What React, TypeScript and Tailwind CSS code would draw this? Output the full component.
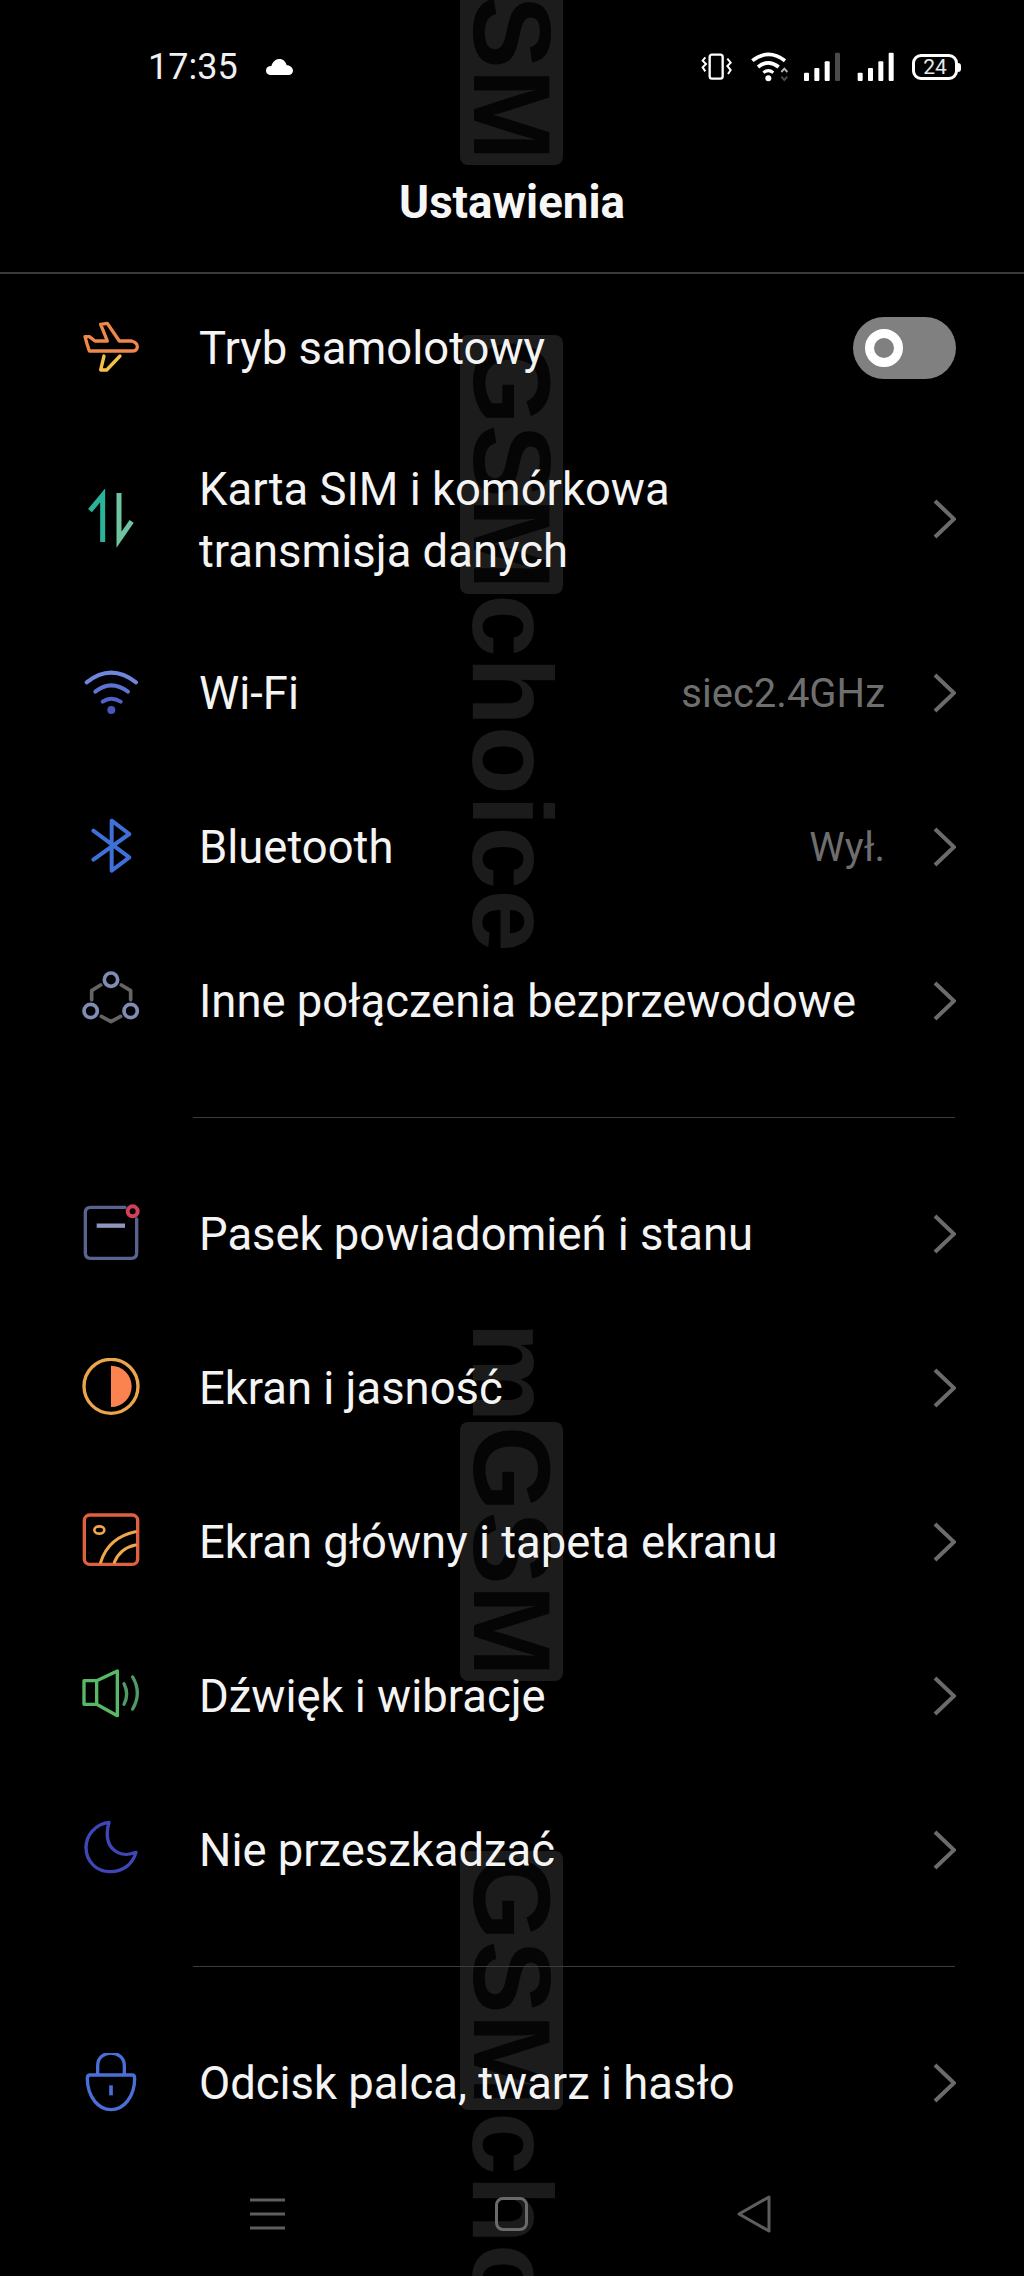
import React from "react";

const Chevron = () => (
  <svg width="24" height="40" viewBox="0 0 24 40" fill="none" className="shrink-0">
    <path d="M3 2 L22 20 L3 38" stroke="#6b6b6b" strokeWidth="4" />
  </svg>
);

const Icon = ({ vb, children }: { vb: string; children: React.ReactNode }) => (
  <svg
    width="60"
    height="60"
    viewBox={vb}
    fill="none"
    strokeLinecap="round"
    strokeLinejoin="round"
    className="shrink-0"
  >
    {children}
  </svg>
);

const PlaneIcon = () => (
  <Icon vb="63 84 180 180">
    <path
      d="M75 140 L88 140 L105 153 L142 153 L122 103 L142 100 L178 153 L215 153 Q232 158 232 170 Q232 183 215 183 L88 183 Q80 160 75 140 Z"
      stroke="#f0884a"
      strokeWidth="10"
    />
    <path d="M132 198 L122 240 L140 240 L180 198" stroke="#f5c04a" strokeWidth="10" />
  </Icon>
);

const SimIcon = () => (
  <Icon vb="63 603 180 180">
    <path d="M128 762 L128 622 L90 668" stroke="#2bb39a" strokeWidth="15" strokeLinecap="butt" strokeLinejoin="miter" />
    <path d="M177 615 L177 755 L215 700" stroke="#6fc3a0" strokeWidth="15" strokeLinecap="butt" strokeLinejoin="miter" />
  </Icon>
);

const WifiIcon = () => (
  <Icon vb="63 1122 180 180">
    <path d="M80 1180 Q153 1122 228 1180" stroke="#7085dc" strokeWidth="12" />
    <path d="M106 1208 Q153 1170 204 1208" stroke="#5f74d2" strokeWidth="12" />
    <path d="M128 1238 Q153 1220 182 1238" stroke="#5062c6" strokeWidth="12" />
    <circle cx="154" cy="1263" r="12" fill="#4656ba" />
  </Icon>
);

const BluetoothIcon = () => (
  <Icon vb="63 84 180 180">
    <path d="M100 125 L208 205 L155 245 L155 95 L208 135 L100 212" stroke="#3f6fd8" strokeWidth="12" />
  </Icon>
);

const WirelessIcon = () => (
  <Icon vb="63 66 180 180">
    <path d="M122 108 L95 125 L95 152 M184 108 L212 125 L212 152 M124 202 L153 218 L182 202" stroke="#646464" strokeWidth="11" />
    <circle cx="153" cy="92" r="20" stroke="#818cb4" strokeWidth="11" />
    <circle cx="92" cy="186" r="20" stroke="#818cb4" strokeWidth="11" />
    <circle cx="212" cy="186" r="20" stroke="#818cb4" strokeWidth="11" />
  </Icon>
);

const NotificationIcon = () => (
  <Icon vb="63 765 180 180">
    <path
      d="M195 775 L92 775 Q76 775 76 791 L76 912 Q76 928 92 928 L214 928 Q230 928 230 912 L230 810"
      stroke="#5a6390"
      strokeWidth="10"
    />
    <path d="M110 830 L195 830" stroke="#8f96bd" strokeWidth="13" strokeLinecap="butt" />
    <circle cx="218" cy="787" r="15" stroke="#d14058" strokeWidth="12" />
  </Icon>
);

const BrightnessIcon = () => (
  <Icon vb="63 1227 180 180">
    <circle cx="153" cy="1312" r="81" stroke="#eba64c" strokeWidth="10" />
    <path d="M153 1250 A62 62 0 0 1 153 1374 Z" fill="#fb8350" />
  </Icon>
);

const WallpaperIcon = () => (
  <Icon vb="63 249 180 180">
    <rect x="73" y="258" width="160" height="148" rx="16" stroke="#e0613f" strokeWidth="10" />
    <ellipse cx="118" cy="303" rx="15" ry="11" stroke="#f0a64d" strokeWidth="8" />
    <path d="M122 400 Q145 325 226 308 M163 400 Q180 358 226 348" stroke="#f0a64d" strokeWidth="9" />
  </Icon>
);

const SoundIcon = () => (
  <Icon vb="63 711 180 180">
    <path d="M72 755 L110 755 L172 726 L172 860 L110 826 L72 826 Z M110 755 L110 826" stroke="#58b868" strokeWidth="10" />
    <path d="M192 764 Q208 795 192 826" stroke="#4f9a65" strokeWidth="10" />
    <path d="M218 744 Q246 792 218 840" stroke="#4f9a65" strokeWidth="10" />
  </Icon>
);

const MoonIcon = () => (
  <Icon vb="63 1173 180 180">
    <path
      d="M147 1180 C105 1185 78 1220 78 1255 C78 1300 112 1328 150 1328 C190 1328 218 1305 228 1270 C180 1290 125 1260 147 1180 Z"
      stroke="#3f47b8"
      strokeWidth="10"
    />
  </Icon>
);

const LockIcon = () => (
  <Icon vb="63 1872 180 180">
    <path
      d="M90 1938 L216 1938 Q224 1938 224 1948 C224 2005 190 2042 153 2042 C116 2042 82 2005 82 1948 Q82 1938 90 1938 Z"
      stroke="#4a70d8"
      strokeWidth="10"
    />
    <path d="M113 1935 L113 1910 C113 1860 193 1860 193 1910 L193 1935" stroke="#4a70d8" strokeWidth="10" />
    <path d="M153 1969 L153 1999" stroke="#4a70d8" strokeWidth="11" strokeLinecap="butt" />
  </Icon>
);

const Row = ({
  icon,
  label,
  value,
  height = "h-[154px]",
  toggle,
}: {
  icon: React.ReactNode;
  label: React.ReactNode;
  value?: string;
  height?: string;
  toggle?: boolean;
}) => (
  <div className={`flex items-center pl-[81px] pr-[68px] ${height}`}>
    <div className="w-[118px] shrink-0">{icon}</div>
    <div className="flex-1 pt-[2px] text-[45.4px] leading-[62px] text-[#f4f4f4]">{label}</div>
    {value && <span className="mr-[47px] pt-[2px] text-[40px] text-[#6e6e6e]">{value}</span>}
    {toggle ? (
      <div className="flex h-[62px] w-[103px] items-center rounded-full bg-[#808080] pl-[12px]">
        <div className="h-[38px] w-[38px] rounded-full border-[9px] border-white" />
      </div>
    ) : (
      <Chevron />
    )}
  </div>
);

const Divider = () => <div className="my-[39px] ml-[193px] mr-[69px] h-px bg-[#3c3c3c]" />;

const boxClass =
  "absolute left-[460px] flex h-[259px] w-[103px] items-center justify-center rounded-lg bg-[#1c1c1c] text-[110px] font-bold leading-none text-[#050505] [writing-mode:vertical-rl]";
const looseClass =
  "absolute left-[460px] flex w-[103px] items-center justify-center text-[113px] font-bold leading-none text-[#1b1b1b] [writing-mode:vertical-rl]";

const Watermark = () => (
  <div className="font-['Liberation_Sans',sans-serif]">
    <div className={`${boxClass} top-[-94px]`}>GSM</div>
    <div className={`${boxClass} top-[335px]`}>GSM</div>
    <div className={`${looseClass} top-[594px]`}>choice</div>
    <div className={`${looseClass} top-[1322px]`}>m</div>
    <div className={`${boxClass} top-[1422px]`}>GSM</div>
    <div className={`${boxClass} top-[1851px]`}>GSM</div>
    <div className={`${looseClass} top-[2112px]`}>choice</div>
  </div>
);

const StatusIcons = () => (
  <div className="flex items-center">
    <svg width="32" height="30" viewBox="125 72 96 90" fill="none" stroke="white" strokeWidth="7">
      <rect x="151" y="80" width="39" height="72" rx="7" />
      <path d="M138 88 L130 98 L140 108 L130 118 L138 130 M204 92 L214 104 L204 114 L214 126 L206 138" strokeWidth="6" />
    </svg>
    <svg className="ml-[18px]" width="40" height="30" viewBox="275 70 120 90" fill="none">
      <path d="M279 96 Q327 58 377 96" stroke="white" strokeWidth="11" />
      <path d="M296 115 Q327 90 358 115" stroke="white" strokeWidth="11" />
      <path d="M312 132 Q327 120 342 132" stroke="white" strokeWidth="9" />
      <circle cx="327" cy="149" r="9" fill="white" />
      <path d="M366 130 L375 120 L384 130" stroke="#b5b5b5" strokeWidth="6" />
      <path d="M366 144 L375 154 L384 144" stroke="#4a4a4a" strokeWidth="6" />
    </svg>
    <svg className="ml-[12px]" width="37" height="30" viewBox="430 70 111 90">
      <rect x="433" y="132" width="15" height="25" rx="3" fill="white" />
      <rect x="464" y="118" width="15" height="39" rx="3" fill="white" />
      <rect x="495" y="98" width="15" height="59" rx="3" fill="white" />
      <rect x="526" y="72" width="15" height="85" rx="3" fill="#4a4a4a" />
    </svg>
    <svg className="ml-[17px]" width="37" height="30" viewBox="590 70 111 90">
      <rect x="592" y="132" width="15" height="25" rx="3" fill="white" />
      <rect x="623" y="118" width="15" height="39" rx="3" fill="white" />
      <rect x="654" y="98" width="15" height="59" rx="3" fill="white" />
      <rect x="685" y="72" width="15" height="85" rx="3" fill="white" />
    </svg>
    <div className="relative ml-[18px] flex h-[26px] w-[46px] items-center justify-center rounded-[9px] border-[3px] border-white text-[21px] leading-none text-[#e8e8e8]">
      24
      <div className="absolute right-[-6px] top-[6px] h-[9px] w-[3px] rounded-r bg-white" />
    </div>
  </div>
);

const NavBar = () => (
  <div className="flex h-[115px] items-center justify-between pb-[8px] pl-[250px] pr-[253px]">
    <svg width="35" height="32" viewBox="0 0 35 32" stroke="#5e5e5e" strokeWidth="3">
      <path d="M0 2 H35 M0 16 H35 M0 30 H35" />
    </svg>
    <div className="h-[34px] w-[33px] rounded-[8px] border-[3px] border-[#6a6a6a]" />
    <svg width="34" height="38" viewBox="0 0 34 38" fill="none" stroke="#5e5e5e" strokeWidth="3" strokeLinejoin="round">
      <path d="M2 19 L32 2 L32 36 Z" />
    </svg>
  </div>
);

export default function App() {
  return (
    <div className="relative h-[2276px] w-[1024px] overflow-hidden bg-black font-['Roboto',sans-serif] text-white">
      <Watermark />
      <div className="relative">
        <div className="flex h-[134px] items-center justify-between pl-[148px] pr-[66px]">
          <div className="flex items-center">
            <span className="text-[36px] font-normal text-[#f0f0f0]">17:35</span>
            <svg className="ml-[26px]" width="31" height="18" viewBox="0 0 32 20" fill="white">
              <path d="M7 19 C2 19 1 16 1 14 C1 11 3 9 7 9 C8 4 12 1 16 1 C20 1 23 4 24 8 C28 8 31 11 31 14 C31 17 29 19 26 19 Z" />
            </svg>
          </div>
          <StatusIcons />
        </div>
        <div className="flex h-[140px] items-center justify-center border-b-2 border-[#3a3a3a] text-[45.7px] font-bold text-[#f6f6f6]">
          Ustawienia
        </div>
        <Row icon={<PlaneIcon />} label="Tryb samolotowy" height="h-[148px]" toggle />
        <Row
          icon={<SimIcon />}
          label={
            <span className="block pt-[2px]">
              Karta SIM i komórkowa
              <br />
              transmisja danych
            </span>
          }
          height="h-[194px]"
        />
        <Row icon={<WifiIcon />} label="Wi-Fi" value="siec2.4GHz" />
        <Row icon={<BluetoothIcon />} label="Bluetooth" value="Wył." />
        <Row icon={<WirelessIcon />} label="Inne połączenia bezprzewodowe" />
        <Divider />
        <Row icon={<NotificationIcon />} label="Pasek powiadomień i stanu" />
        <Row icon={<BrightnessIcon />} label="Ekran i jasność" />
        <Row icon={<WallpaperIcon />} label="Ekran główny i tapeta ekranu" />
        <Row icon={<SoundIcon />} label="Dźwięk i wibracje" />
        <Row icon={<MoonIcon />} label="Nie przeszkadzać" />
        <Divider />
        <Row icon={<LockIcon />} label="Odcisk palca, twarz i hasło" />
        <NavBar />
      </div>
    </div>
  );
}
